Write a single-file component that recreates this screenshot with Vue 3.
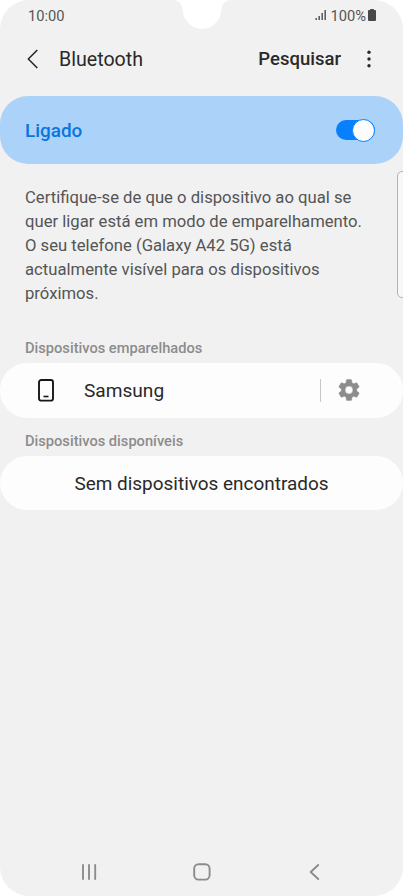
<script setup>
const description = [
  'Certifique-se de que o dispositivo ao qual se',
  'quer ligar está em modo de emparelhamento.',
  'O seu telefone (Galaxy A42 5G) está',
  'actualmente visível para os dispositivos',
  'próximos.',
]
</script>

<template>
  <main class="phone">
    <svg class="notch" width="64" height="30" viewBox="0 0 64 30" aria-hidden="true">
      <path d="M3 0C9 .6 12.2 4 12.5 9.5C13.3 20.4 21.5 29 32 29S50.700 20.400 51.500 9.500C51.800 4 55 .6 61 0Z" fill="#fff" />
    </svg>

    <div class="status">
      <span class="clock">10:00</span>
      <div class="indicators">
        <svg width="12" height="12" viewBox="0 0 12 12" aria-hidden="true">
          <path d="M1.200 9V11M4.200 7V11M7.200 4V11M10.200 1V11" stroke="#555" stroke-width="1.500" />
        </svg>
        <span class="percent">100%</span>
        <svg class="battery" width="8" height="12" viewBox="0 0 8 12" aria-hidden="true">
          <path d="M2.200 0H5.800V1H7.200Q8 1 8 2V11Q8 12 7 12H1Q0 12 0 11V2Q0 1 .8 1H2.200Z" fill="#484848" />
        </svg>
      </div>
    </div>

    <header class="bar">
      <svg width="12" height="20" viewBox="0 0 12 20" aria-hidden="true">
        <path d="M10.300 1L1.300 10L10.300 19" fill="none" stroke="#292929" stroke-width="1.600" stroke-linejoin="round" />
      </svg>
      <h1 class="title">Bluetooth</h1>
      <span class="search">Pesquisar</span>
      <svg class="more" width="4" height="18" viewBox="0 0 4 18" aria-hidden="true">
        <g fill="#292929"><circle cx="2" cy="2.300" r="1.700" /><circle cx="2" cy="9" r="1.700" /><circle cx="2" cy="15.700" r="1.700" /></g>
      </svg>
    </header>

    <section class="power">
      <span class="power-label">Ligado</span>
      <span class="switch"><span class="knob"></span></span>
    </section>

    <p class="description">
      <span v-for="line in description" :key="line" class="line">{{ line }}</span>
    </p>
    <span class="edge-handle"></span>

    <h2 class="group paired">Dispositivos emparelhados</h2>
    <section class="card device">
      <svg width="16" height="23" viewBox="0 0 16 23" aria-hidden="true">
        <rect x="1" y="1" width="14" height="20.600" rx="2.200" fill="none" stroke="#171717" stroke-width="1.900" />
        <path d="M5.500 17.500H10.500" stroke="#171717" stroke-width="1.600" />
      </svg>
      <span class="name">Samsung</span>
      <span class="divider"></span>
      <svg class="gear" width="26" height="26" viewBox="0 0 24 24" aria-hidden="true">
        <path fill="#8c8c8c" stroke="#8c8c8c" stroke-width=".4" stroke-linejoin="round" fill-rule="evenodd" d="M19.140 12.940c.04-.3.060-.61.060-.94s-.02-.64-.07-.94l2.030-1.580a.49.490 0 0 0 .12-.61l-1.920-3.320a.49.490 0 0 0-.59-.22l-2.390.96a7 7 0 0 0-1.620-.94l-.36-2.540A.48.480 0 0 0 13.920 2.400h-3.840c-.24 0-.43.170-.47.410l-.36 2.540c-.59.240-1.130.57-1.620.94l-2.390-.96a.49.490 0 0 0-.59.220L2.740 8.870a.48.480 0 0 0 .12.610l2.030 1.580a7 7 0 0 0 0 1.880l-2.030 1.580a.49.490 0 0 0-.12.610l1.920 3.320c.12.220.37.290.59.220l2.390-.96c.5.380 1.030.7 1.620.94l.36 2.540c.05.240.24.410.48.410h3.840c.24 0 .44-.17.470-.41l.36-2.540a7 7 0 0 0 1.620-.94l2.390.96c.22.080.47 0 .59-.22l1.920-3.320a.48.480 0 0 0-.12-.61ZM12 15.600a3.600 3.600 0 1 1 0-7.200 3.600 3.600 0 0 1 0 7.200Z" />
      </svg>
    </section>

    <h2 class="group available">Dispositivos disponíveis</h2>
    <section class="card empty"><span>Sem dispositivos encontrados</span></section>

    <nav class="navigation">
      <svg width="18" height="18" viewBox="0 0 18 18" aria-hidden="true">
        <path d="M3 2V16M9 2V16M15.200 2V16" stroke="#8c8c8c" stroke-width="1.900" stroke-linecap="round" />
      </svg>
      <svg width="18" height="18" viewBox="0 0 18 18" aria-hidden="true">
        <rect x="1.200" y="1.200" width="15.400" height="15.400" rx="4.300" fill="none" stroke="#8c8c8c" stroke-width="1.900" />
      </svg>
      <svg width="18" height="18" viewBox="0 0 18 18" aria-hidden="true">
        <path d="M13.200 2L5.700 9L13.200 16" fill="none" stroke="#8c8c8c" stroke-width="1.900" stroke-linecap="round" stroke-linejoin="round" />
      </svg>
    </nav>
  </main>
</template>

<style>
body { margin: 0; background: #fff; }
</style>

<style scoped>
* { box-sizing: border-box; }
svg { display: block; flex: none; }
.phone {
  position: relative;
  display: flex;
  flex-direction: column;
  width: 403px;
  height: 896px;
  overflow: hidden;
  border-radius: 29px;
  background: #f1f1f1;
  color: #292929;
  font-family: Roboto, sans-serif;
}
.notch { position: absolute; top: 0; left: 169.500px; }
.status {
  display: flex;
  align-items: center;
  justify-content: space-between;
  height: 30px;
  padding: 0 27.500px 0 28px;
  color: #555;
  font-size: 14.700px;
  line-height: 28px;
}
.indicators { display: flex; align-items: center; }
.percent { margin-left: 3px; }
.clock, .percent { padding-top: 1px; }
.battery { margin-left: 1.500px; }
.bar { display: flex; align-items: center; height: 58px; padding: 0 32px 0 27px; }
.title { margin: 0 0 0 20px; padding-top: 2px; font-size: 19.600px; font-weight: 400; line-height: 24px; }
.search { margin-left: auto; font-size: 18.500px; font-weight: 500; line-height: 24px; }
.more { margin-left: 26px; }
.power {
  display: flex;
  flex: none;
  align-items: center;
  justify-content: space-between;
  height: 68px;
  margin-top: 8px;
  padding: 0 28px 0 25px;
  border-radius: 28px;
  background: #abd2f9;
}
.power-label { color: #0876df; font-size: 18.900px; font-weight: 500; }
.switch { display: flex; align-items: center; justify-content: flex-end; width: 39px; height: 20px; border-radius: 10px; background: #0880fd; }
.knob { flex: none; width: 23px; height: 23px; border: 1px solid #0880fd; border-radius: 50%; background: #fcfcfc; }
.description { margin: 22px 0 0 25px; color: #555; font-size: 16.670px; line-height: 24px; }
.line { display: block; white-space: nowrap; }
.edge-handle {
  position: absolute;
  top: 171px;
  left: 397px;
  width: 12px;
  height: 127px;
  border: 1.500px solid #b3b3b3;
  border-radius: 5px;
  background: #f8f8f8;
}
.group { margin: 0 0 0 25px; color: #8c8c8c; font-size: 14.650px; font-weight: 500; line-height: 20px; }
.paired { margin-top: 32px; }
.available { margin-top: 13px; }
.card { display: flex; flex: none; align-items: center; height: 54.500px; margin-top: 5px; border-radius: 27px; background: #fdfdfd; font-size: 18.950px; }
.device { padding: 0 41px 0 38px; }
.name { margin-left: 30px; padding-top: 1px; font-size: 19.100px; }
.divider { width: 1px; height: 23px; margin-left: auto; background: #c8c8c8; }
.gear { margin-left: 15.500px; }
.empty { justify-content: center; padding-top: 1px; }
.navigation { display: flex; justify-content: space-between; margin-top: auto; padding: 0 80px 15px; }
</style>
